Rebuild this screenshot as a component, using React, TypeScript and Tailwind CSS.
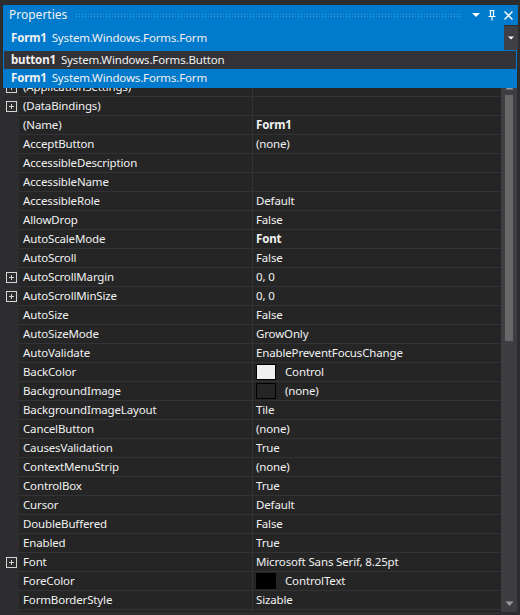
import React from "react";

type Row = {
  name: string;
  value?: string;
  bold?: boolean;
  expand?: boolean;
  swatch?: string;
};

const rows: Row[] = [
  { name: "(ApplicationSettings)", expand: true },
  { name: "(DataBindings)", expand: true },
  { name: "(Name)", value: "Form1", bold: true },
  { name: "AcceptButton", value: "(none)" },
  { name: "AccessibleDescription", value: "" },
  { name: "AccessibleName", value: "" },
  { name: "AccessibleRole", value: "Default" },
  { name: "AllowDrop", value: "False" },
  { name: "AutoScaleMode", value: "Font", bold: true },
  { name: "AutoScroll", value: "False" },
  { name: "AutoScrollMargin", value: "0, 0", expand: true },
  { name: "AutoScrollMinSize", value: "0, 0", expand: true },
  { name: "AutoSize", value: "False" },
  { name: "AutoSizeMode", value: "GrowOnly" },
  { name: "AutoValidate", value: "EnablePreventFocusChange" },
  { name: "BackColor", value: "Control", swatch: "#f0f0f0" },
  { name: "BackgroundImage", value: "(none)", swatch: "#252526" },
  { name: "BackgroundImageLayout", value: "Tile" },
  { name: "CancelButton", value: "(none)" },
  { name: "CausesValidation", value: "True" },
  { name: "ContextMenuStrip", value: "(none)" },
  { name: "ControlBox", value: "True" },
  { name: "Cursor", value: "Default" },
  { name: "DoubleBuffered", value: "False" },
  { name: "Enabled", value: "True" },
  { name: "Font", value: "Microsoft Sans Serif, 8.25pt", expand: true },
  { name: "ForeColor", value: "ControlText", swatch: "#000000" },
  { name: "FormBorderStyle", value: "Sizable" },
  { name: "", value: "" },
];

function PlusBox() {
  return (
    <svg width="11" height="11" viewBox="0 0 11 11" className="block">
      <rect x="0.5" y="0.5" width="10" height="10" fill="none" stroke="#d4d4d4" />
      <path d="M3 5.5h5M5.5 3v5" stroke="#d4d4d4" strokeWidth="1" />
    </svg>
  );
}

export default function App() {
  return (
    <div
      className="relative w-[520px] h-[615px] overflow-hidden bg-[#2d2d30] text-[11.5px] tracking-[-0.15px] text-[#f1f1f1]"
      style={{ fontFamily: '"Noto Sans", "Open Sans", sans-serif' }}
    >
      <div className="pt-[5px] pl-[3px] pr-[2px]">
        {/* title bar */}
        <div className="h-[20px] bg-[#007acc] flex items-center pl-[6px] pr-[4px] gap-[6px]">
          <span className="leading-none text-[12px] tracking-normal">Properties</span>
          <div
            className="flex-1 h-[5px] mx-[2px]"
            style={{
              backgroundImage:
                "radial-gradient(circle, #59a8de 0.7px, transparent 0.8px)",
              backgroundSize: "3px 2.5px",
            }}
          />
          <div className="flex items-center gap-[6px]">
            <svg width="10" height="10" viewBox="0 0 10 10">
              <path d="M1 3h8L5 7z" fill="#ffffff" />
            </svg>
            <svg width="10" height="12" viewBox="0 0 10 12">
              <path d="M2.5 1.5h5M3.5 1.5v6M6.5 1.5v6M1.5 7.5h7M5 7.5V11.5" stroke="#ffffff" strokeWidth="1.2" fill="none" />
            </svg>
            <svg width="11" height="11" viewBox="0 0 11 11">
              <path d="M1.5 1.5l8 8M9.5 1.5l-8 8" stroke="#ffffff" strokeWidth="1.4" />
            </svg>
          </div>
        </div>
        {/* combo */}
        <div className="h-[25px] flex">
          <div className="flex-1 bg-[#007acc] flex items-center pl-[8px] gap-[5px]">
            <span className="font-bold">Form1</span>
            <span>System.Windows.Forms.Form</span>
          </div>
          <div className="w-[14px] mt-[1px] bg-[#3f3f46] flex items-center justify-center">
            <svg width="8" height="6" viewBox="0 0 8 6">
              <path d="M1 1.5h6L4 4.5z" fill="#ffffff" />
            </svg>
          </div>
        </div>
        {/* toolbar placeholder */}
        <div className="h-[28px]" />
      </div>

      {/* grid */}
      <div className="flex pl-[3px] pr-[3px] h-[534px] overflow-hidden">
        <div className="flex-1 flex flex-col">
          {rows.map((r, i) => (
            <div key={i} className="h-[19px] shrink-0 flex">
              <div className="w-[16px] bg-[#2d2d30] flex items-center justify-center">
                {r.expand && <PlusBox />}
              </div>
              <div className="w-[234px] bg-[#252526] border-b border-[#333337] border-r flex items-center pl-[4px] whitespace-nowrap overflow-hidden">
                {r.name}
              </div>
              <div className="flex-1 bg-[#252526] border-b border-[#333337] flex items-center pl-[3px] whitespace-nowrap overflow-hidden">
                {r.swatch ? (
                  <>
                    <div
                      className="w-[20px] h-[16px] border border-[#000000] shrink-0"
                      style={{ backgroundColor: r.swatch }}
                    />
                    <span className="ml-[9px]">{r.value}</span>
                  </>
                ) : (
                  <span className={r.bold ? "font-bold" : ""}>{r.value}</span>
                )}
              </div>
            </div>
          ))}
        </div>
        {/* scrollbar */}
        <div className="w-[16px] bg-[#3e3e42] flex flex-col items-center">
          <div className="h-[17px] shrink-0 flex items-center justify-center">
            <svg width="9" height="6" viewBox="0 0 9 6">
              <path d="M0.5 5.5h8L4.5 1z" fill="#999999" />
            </svg>
          </div>
          <div className="w-[8px] h-[246px] shrink-0 bg-[#686868]" />
          <div className="flex-1" />
          <div className="h-[17px] shrink-0 flex items-center justify-center">
            <svg width="9" height="6" viewBox="0 0 9 6">
              <path d="M0.5 0.5h8L4.5 5z" fill="#999999" />
            </svg>
          </div>
        </div>
      </div>

      {/* dropdown list overlay */}
      <div className="absolute left-[3px] top-[50px] w-[514px] border border-[#007acc] bg-[#007acc]">
        <div className="h-[18px] bg-[#333337] flex items-center pl-[7px] gap-[5px]">
          <span className="font-bold">button1</span>
          <span>System.Windows.Forms.Button</span>
        </div>
        <div className="h-[18px] bg-[#007acc] flex items-center pl-[7px] gap-[5px]">
          <span className="font-bold">Form1</span>
          <span>System.Windows.Forms.Form</span>
        </div>
      </div>
    </div>
  );
}
